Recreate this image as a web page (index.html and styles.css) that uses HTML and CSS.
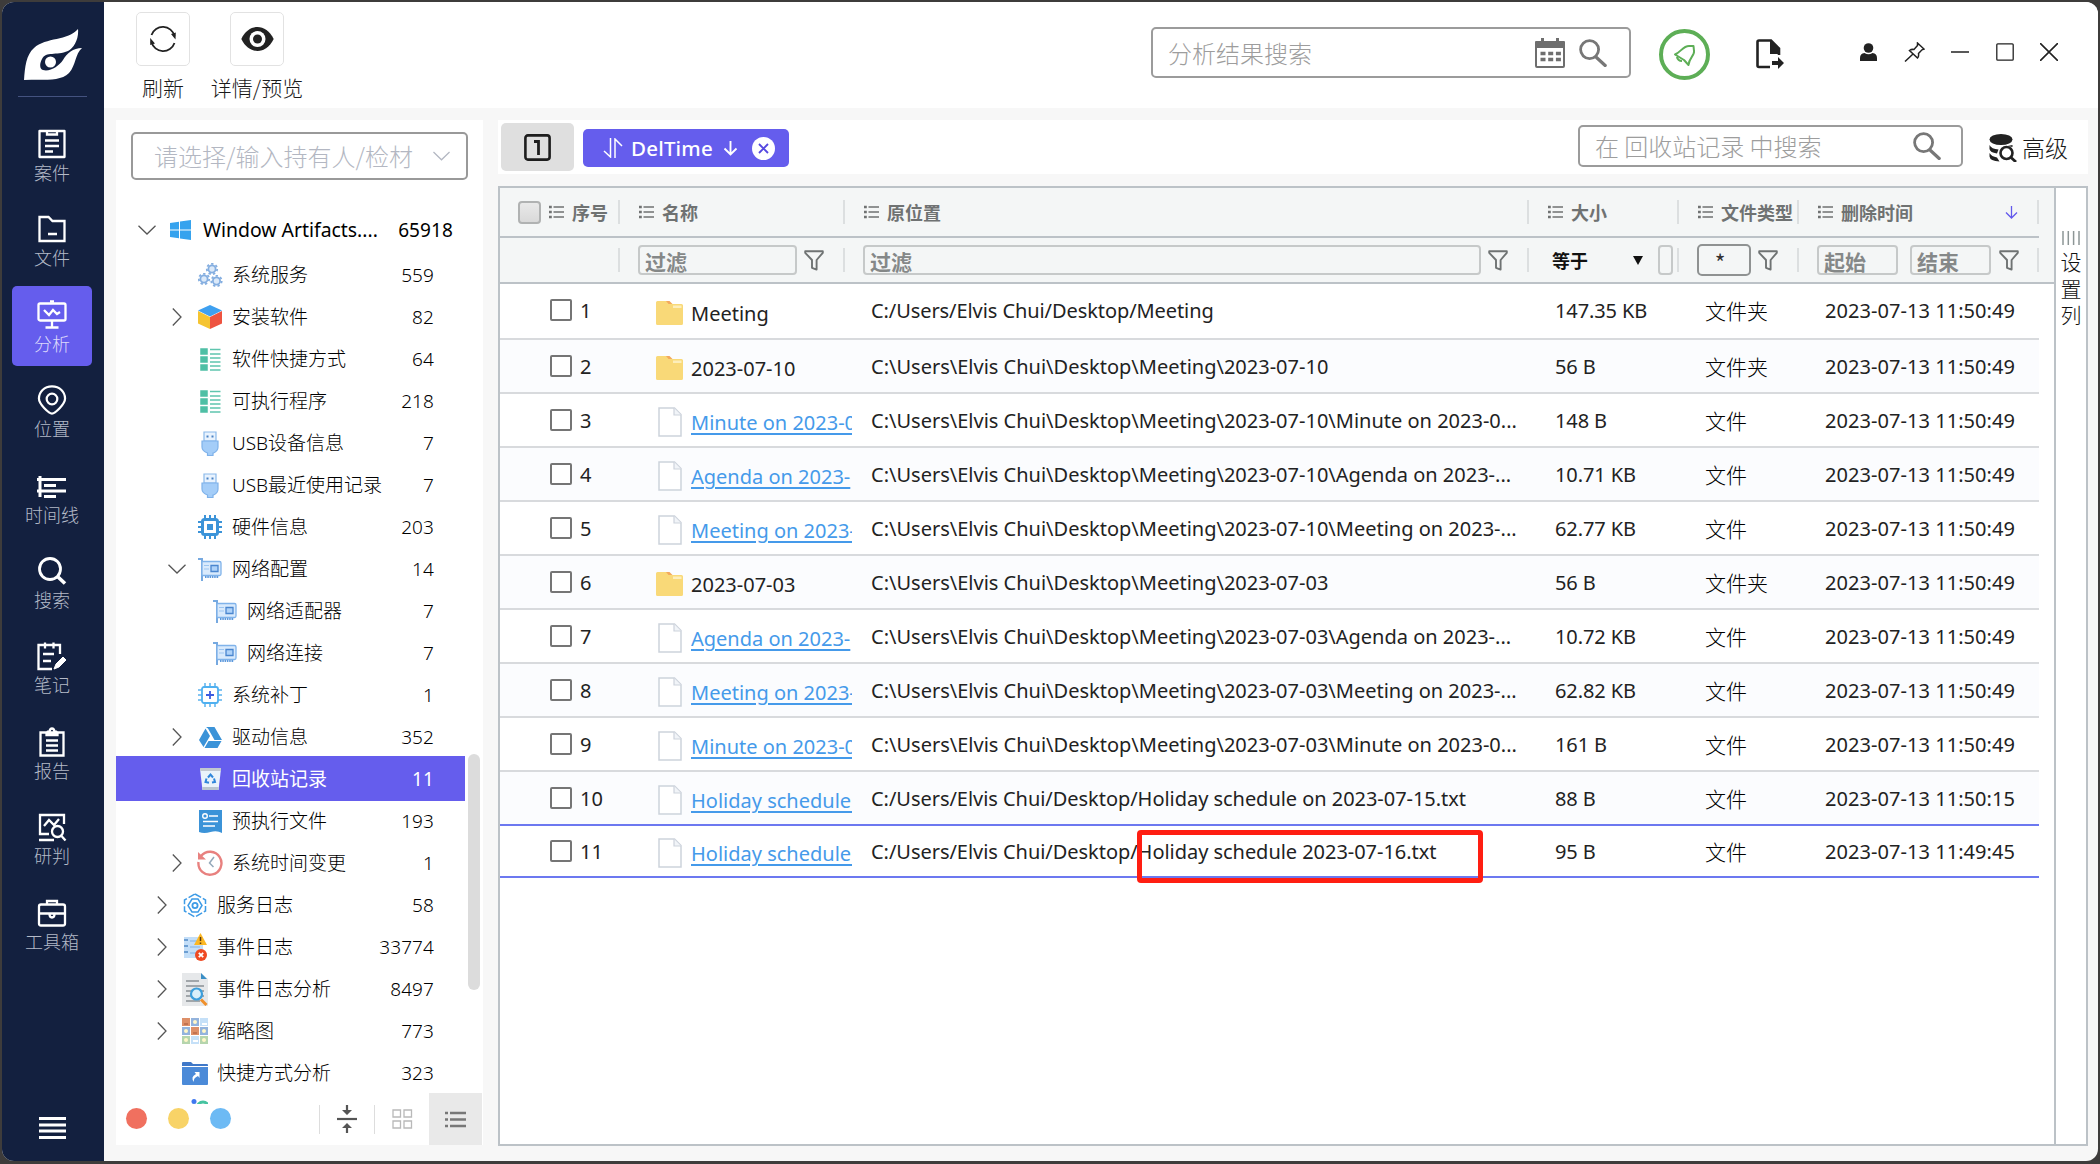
FILE: index.html
```html
<!DOCTYPE html>
<html lang="zh-CN">
<head>
<meta charset="utf-8">
<title>回收站记录</title>
<link rel="stylesheet" href="styles.css">
</head>
<body>
<svg class="defs" aria-hidden="true">
  <symbol id="list" viewBox="0 0 15 14"><path d="M4.5 2H15M4.5 7H15M4.5 12H15" stroke="currentColor" stroke-width="1.6"/><path d="M0 2h2.8M0 7h2.8M0 12h2.8" stroke="currentColor" stroke-width="2.6"/></symbol>
  <symbol id="funnel" viewBox="0 0 20 21"><path d="M1.2 1.2h17.6v1.6L12.6 10v9.6L8 17.8V10L1.2 2.8z" fill="none" stroke="#6f7373" stroke-width="1.9" stroke-linejoin="round"/></symbol>
  <symbol id="search" viewBox="0 0 28 28"><circle cx="10.6" cy="10.6" r="9" fill="none" stroke="currentColor" stroke-width="2.8"/><path d="M17.5 18.5l8.7 8" stroke="currentColor" stroke-width="3.2" stroke-linecap="round"/></symbol>
  <symbol id="down" viewBox="0 0 18 10"><path d="M.5.8L9 9 17.500.8" fill="none" stroke="currentColor" stroke-width="1.3"/></symbol>
  <symbol id="right" viewBox="0 0 10 18"><path d="M.8.500L9 9 .8 17.500" fill="none" stroke="currentColor" stroke-width="1.3"/></symbol>
  <symbol id="folder" viewBox="0 0 27 24"><path d="M0 1.500Q0 0 1.500 0H11l4 3h10.500Q27 3 27 4.500V22.500Q27 24 25.500 24H1.500Q0 24 0 22.500z" fill="#f9d978"/><path d="M10 0h3.500l3 3h-4z" fill="#f3a95d"/><path d="M17 4.500h8.500v2.500H17z" fill="#fdeebb"/></symbol>
  <symbol id="file" viewBox="0 0 24 30"><path d="M1 1h15.500L23 7.500V29H1z" fill="#fff" stroke="#cdd3dc" stroke-width="1.500"/><path d="M16 1v7h7" fill="#f1f4f8" stroke="#cdd3dc" stroke-width="1.200"/></symbol>
  <symbol id="rows" viewBox="0 0 21 25"><path d="M0 1h8v7H0zM0 9h8v7H0zM0 17h8v7H0z" fill="#4fbfa5" stroke="#fff" stroke-width=".5"/><path d="M10 2.500h10.500M10 7h10.500M10 11h10.500M10 15h10.500M10 19h10.500M10 23h10.500" stroke="#5fc5ae" stroke-width="1.300"/></symbol>
  <symbol id="usb" viewBox="0 0 18 25"><path d="M3 1h12v9H3z" fill="#e9f3fe" stroke="#8bb9ea" stroke-width="1.200"/><path d="M5.500 4.500h2v2h-2zM10.500 4.500h2v2h-2z" fill="#4a82c4"/><path d="M1 10h16v6q0 4-4.500 6H12v2.500H6.500V22Q1 20 1 16z" fill="#a4cdf8" stroke="#7fb2ea" stroke-width="1.200"/></symbol>
  <symbol id="card" viewBox="0 0 24 23"><path d="M0 1h4v22" fill="none" stroke="#76a9e0" stroke-width="2"/><path d="M4 3.500h17.500q1.500 0 1.500 1.500v11q0 1.500-1.500 1.500H4z" fill="#d9eafc" stroke="#80b3ea" stroke-width="1.300"/><path d="M13 7.500h7v6h-7z" fill="#aed2f9" stroke="#4a86cf" stroke-width="1.300"/><path d="M6 7.500h5M6 11h5" stroke="#9cc5f1"/><path d="M7 19h14" stroke="#5d99dc" stroke-width="2.200" stroke-dasharray="1.500 .8"/></symbol>
</svg>

<div class="window">
  <nav class="rail">
    <svg class="logo" viewBox="0 0 58 51"><path d="M0 51C1 38 2 26 10 19 22 8 44 12 54 0 55 10 50 19 44 22 32 27 22 22 18 30 15 36 16 40 19 41 26 43 35 37 39 31 43 24 49 19 58 19 51 25 52 36 45 44 36 53 20 50 0 51z" fill="#fff"/><circle cx="26.500" cy="33" r="5.500" fill="#fff"/></svg>
    <div class="rail-line"></div>
    <div class="rail-items">
      <div class="rail-item"><svg viewBox="0 0 30 30"><path d="M2.500 2h25v26h-25z" stroke-linejoin="round"/><path d="M10 2v3.500h10V2M8 11.500h14M8 17h14M8 22.500h8"/></svg><span>案件</span></div>
      <div class="rail-item"><svg viewBox="0 0 30 30"><path d="M2.500 3h9l4 4h12v20h-25z"/><path d="M11 20h9"/></svg><span>文件</span></div>
      <div class="rail-item active"><svg viewBox="0 0 30 30"><rect x="1.500" y="3.500" width="27" height="17" rx="1.500"/><path d="M13 1.500h4M7 10l5 5 4-5 4 4 3-2M15 21v6M8.500 27.500h13"/></svg><span>分析</span></div>
      <div class="rail-item"><svg viewBox="0 0 30 31"><path d="M15 1.500C7 1.500 1.500 7 1.500 14 1.500 20 12 29.500 15 29.500S28.500 20 28.500 14C28.500 7 23 1.500 15 1.500z"/><circle cx="15" cy="14.500" r="5.500"/></svg><span>位置</span></div>
      <div class="rail-item"><svg viewBox="0 0 30 30"><path d="M3 5v21M0 8.500h29M7 14.500h12M0 20h29M7 25.500h12" stroke-width="3"/></svg><span>时间线</span></div>
      <div class="rail-item"><svg viewBox="0 0 30 30"><circle cx="13" cy="13" r="10.500" stroke-width="2.800"/><path d="M20.500 20.500l7.500 7" stroke-width="3.600"/></svg><span>搜索</span></div>
      <div class="rail-item"><svg viewBox="0 0 30 30"><path d="M23 13V4H1.500v24H15M8 1.500v6M16.500 1.500v6M6 13h11M6 20h8"/><path d="M17 28l2-5 7-7 3 3-7 7z" fill="#fff" stroke-width="1"/></svg><span>笔记</span></div>
      <div class="rail-item"><svg viewBox="0 0 30 30"><path d="M3.500 5.500h23V28.500h-23zM9.500 5.500q1-1 3-1 .5-3 2.500-3t2.500 3q2 0 3 1v2.500h-11zM9 13.500h12M9 18.500h12M9 23.500h12"/></svg><span>报告</span></div>
      <div class="rail-item"><svg viewBox="0 0 30 30"><path d="M12 22H3V3h24v9M2 28h15M7 14l5-6 5 5 5-6"/><circle cx="20.500" cy="19.500" r="5.500"/><path d="M24.500 24l4 4.500"/></svg><span>研判</span></div>
      <div class="rail-item"><svg viewBox="0 0 30 30"><rect x="2" y="6.500" width="26" height="21" rx="2"/><path d="M10 6.500V3h10v3.500M2 15.500h26M12.500 16q0 3.500 2.500 3.500t2.500-3.500"/></svg><span>工具箱</span></div>
    </div>
    <svg class="burger" viewBox="0 0 27 22"><path d="M0 1.500h27M0 8h27M0 14h27M0 20.500h27" stroke="#fff" stroke-width="2.800"/></svg>
  </nav>

  <div class="content">
    <header class="topbar">
      <div class="tool"><div class="tool-btn"><svg width="28" height="28" viewBox="0 0 28 28"><path d="M2.500 10A12 12 0 0 1 25.500 11M25.500 18A12 12 0 0 1 2.500 17" fill="none" stroke="#222" stroke-width="1.800"/><path d="M22 9l4.500 5.500.3-7zM6 18.500L1.200 13v7z" fill="#222"/></svg></div><span>刷新</span></div>
      <div class="tool wide"><div class="tool-btn"><svg width="33" height="24" viewBox="0 0 33 24"><path d="M.3 12C8-4 25-4 32.700 12 25 28 8 28 .3 12z" fill="#222"/><circle cx="16.500" cy="12" r="8" fill="#fff"/><circle cx="16.500" cy="12" r="4.500" fill="#222"/></svg></div><span>详情/预览</span></div>
      <div class="global-search"><span>分析结果搜索</span>
        <svg class="cal" viewBox="0 0 30 30"><path d="M1 5h28v23q0 1-1 1H2q-1 0-1-1z" fill="none" stroke="#6e6e6e" stroke-width="2"/><path d="M0 4q0-1 1-1h28q1 0 1 1v6H0zM6 0h3v4H6zM21 0h3v4h-3z" fill="#6e6e6e"/><path d="M5.500 15.500h20.500M5.500 21.500h20.500" stroke="#6e6e6e" stroke-width="3.500" stroke-dasharray="5 2.700"/></svg>
        <svg class="mag"><use href="#search"/></svg>
      </div>
      <div class="bell"><svg width="24" height="24" viewBox="0 0 24 24"><path d="M2 11.500C8 9 10 3 16 3h4.500l.5 5c1 4-5 7-5.500 14l-4.500-5z" fill="none" stroke="#5dae56" stroke-width="2" stroke-linejoin="round"/><path d="M4 14q1 4 5 4" fill="none" stroke="#5dae56" stroke-width="2.200"/></svg></div>
      <svg class="export" viewBox="0 0 28 30"><path d="M14 28H3Q1.500 28 1.500 26.500V3Q1.500 1.500 3 1.500H15L23 9.500V16" fill="none" stroke="#222" stroke-width="2.600"/><path d="M14 1l10 10v4H14z" fill="#222"/><path d="M16 22h6v-4l6 6-6 6v-4h-6z" fill="#222"/></svg>
      <div class="win-controls">
        <svg width="17" height="18" viewBox="0 0 17 18"><circle cx="8.500" cy="5" r="4.800" fill="#222"/><path d="M0 18v-3q0-4.500 4.500-5 4 2.500 8 0 4.500.5 4.500 5v3z" fill="#222"/></svg>
        <svg width="21" height="20" viewBox="0 0 21 20"><path d="M13.500 1l6.500 6-2 .8-3.500 3.700q.5 3-1 4.500L5.500 8.500q2-1.500 4.500-1L13.500 3.500zM9 12L1 19.500" fill="none" stroke="#222" stroke-width="1.500"/></svg>
        <svg width="18" height="18" viewBox="0 0 18 18"><path d="M0 9h18" stroke="#222" stroke-width="1.600"/></svg>
        <svg width="18" height="18" viewBox="0 0 18 18"><rect x=".8" y=".8" width="16.400" height="16.400" rx="1" fill="none" stroke="#222" stroke-width="1.300"/></svg>
        <svg width="18" height="18" viewBox="0 0 18 18"><path d="M0 0l18 18M18 0L0 18" stroke="#222" stroke-width="1.600"/></svg>
      </div>
    </header>

    <div class="panes">
      <aside class="tree-pane">
        <div class="holder"><span>请选择/输入持有人/检材</span><svg width="17" height="10"><use href="#down"/></svg></div>
        <div class="tree">
          <div class="node root"><i class="chev"><svg width="18" height="10"><use href="#down"/></svg></i><i class="ico"><svg width="21" height="20" viewBox="0 0 21 20"><path d="M0 3l9-1.300v7.800H0zM10 1.500L21 0v9.500H10zM0 10.500h9v7.800L0 17zM10 10.500h11V20l-11-1.500z" fill="#36a3ee"/></svg></i><span>Window Artifacts....</span><b>65918</b></div>
          <div class="node l2"><i class="chev"></i><i class="ico"><svg width="25" height="24" viewBox="0 0 25 24"><g fill="#dbe9f9" stroke="#84aee0" stroke-width="1.800"><circle cx="14" cy="6" r="3.600"/><circle cx="6" cy="16" r="3.600"/><circle cx="18.500" cy="18" r="3.600"/></g><g fill="none" stroke="#84aee0" stroke-width="1.800" stroke-dasharray="2.300 2.300"><circle cx="14" cy="6" r="5.200"/><circle cx="6" cy="16" r="5.200"/><circle cx="18.500" cy="18" r="5.200"/></g></svg></i><span>系统服务</span><b>559</b></div>
          <div class="node l2"><i class="chev"><svg width="10" height="18"><use href="#right"/></svg></i><i class="ico"><svg width="24" height="24" viewBox="0 0 24 24"><path d="M12 0l12 5.500-12 6L0 5.500z" fill="#3ea0f0"/><path d="M0 6l12 6v12L0 18.500z" fill="#f5c431"/><path d="M24 6l-12 6v12l12-5.500z" fill="#ee5340"/></svg></i><span>安装软件</span><b>82</b></div>
          <div class="node l2"><i class="chev"></i><i class="ico"><svg width="21" height="25"><use href="#rows"/></svg></i><span>软件快捷方式</span><b>64</b></div>
          <div class="node l2"><i class="chev"></i><i class="ico"><svg width="21" height="25"><use href="#rows"/></svg></i><span>可执行程序</span><b>218</b></div>
          <div class="node l2"><i class="chev"></i><i class="ico"><svg width="18" height="25"><use href="#usb"/></svg></i><span>USB设备信息</span><b>7</b></div>
          <div class="node l2"><i class="chev"></i><i class="ico"><svg width="18" height="25"><use href="#usb"/></svg></i><span>USB最近使用记录</span><b>7</b></div>
          <div class="node l2"><i class="chev"></i><i class="ico"><svg width="24" height="24" viewBox="0 0 24 24"><path d="M7 0v24M12 0v24M17 0v24M0 7h24M0 12h24M0 17h24" stroke="#3b93d8" stroke-width="2"/><rect x="4.500" y="4.500" width="15" height="15" rx="2" fill="#fff" stroke="#3b93d8" stroke-width="3"/><path d="M9 9h6v6H9z" fill="#3b93d8"/></svg></i><span>硬件信息</span><b>203</b></div>
          <div class="node l2"><i class="chev"><svg width="18" height="10"><use href="#down"/></svg></i><i class="ico"><svg width="24" height="23"><use href="#card"/></svg></i><span>网络配置</span><b>14</b></div>
          <div class="node l3"><i class="chev"></i><i class="ico"><svg width="24" height="23"><use href="#card"/></svg></i><span>网络适配器</span><b>7</b></div>
          <div class="node l3"><i class="chev"></i><i class="ico"><svg width="24" height="23"><use href="#card"/></svg></i><span>网络连接</span><b>7</b></div>
          <div class="node l2"><i class="chev"></i><i class="ico"><svg width="24" height="24" viewBox="0 0 24 24"><path d="M7 0v24M12 0v24M17 0v24M0 7h24M0 12h24M0 17h24" stroke="#5bb3ee" stroke-width="1.500"/><rect x="4" y="4" width="16" height="16" rx="2" fill="#fff" stroke="#4fb0f0" stroke-width="1.800"/><path d="M12 8v8M8 12h8" stroke="#3b5be0" stroke-width="1.800"/></svg></i><span>系统补丁</span><b>1</b></div>
          <div class="node l2"><i class="chev"><svg width="10" height="18"><use href="#right"/></svg></i><i class="ico"><svg width="23" height="21" viewBox="0 0 23 21"><path d="M7 0h8.500L23 13h-7.500L9 1.500zM6.500 1.500L11 9 4.500 20 0 13zM9.500 14H22.500L18.500 21H5.500z" fill="#3b93d8"/></svg></i><span>驱动信息</span><b>352</b></div>
          <div class="node l2 selected"><i class="chev"></i><i class="ico"><svg width="21" height="22" viewBox="0 0 21 22"><path d="M0 1h21l-2.500 21h-16z" fill="#eaf3fb"/><path d="M0 0h21v3H.3z" fill="#c2c8d0"/><path d="M2.300 19h16.400l-.3 3H2.600z" fill="#b9c5cf"/><path d="M8 9.500l2.500-3 2.500 3M14 10.500l1 3.500-3 .5M9 14.800l-3.500-.8 1-3.500" fill="none" stroke="#2f86db" stroke-width="2"/></svg></i><span>回收站记录</span><b>11</b></div>
          <div class="node l2"><i class="chev"></i><i class="ico"><svg width="23" height="23" viewBox="0 0 23 23"><path d="M0 0h23v23q-5-3-11.500-1Q5 24 0 22z" fill="#3b93d8"/><circle cx="6" cy="6" r="2.300" fill="none" stroke="#fff" stroke-width="1.400"/><path d="M10 6h9M4 11.500h15M4 16h12" stroke="#fff" stroke-width="1.500"/></svg></i><span>预执行文件</span><b>193</b></div>
          <div class="node l2"><i class="chev"><svg width="10" height="18"><use href="#right"/></svg></i><i class="ico"><svg width="26" height="26" viewBox="0 0 26 26"><path d="M4 6A11.500 11.500 0 1 1 1.500 12" fill="none" stroke="#e8817f" stroke-width="2.400"/><path d="M1 2v7.500h8z" fill="#e8817f"/><path d="M17 7l-4.500 6 4 4" fill="none" stroke="#93a8ba" stroke-width="1.500"/></svg></i><span>系统时间变更</span><b>1</b></div>
          <div class="node l1"><i class="chev"><svg width="10" height="18"><use href="#right"/></svg></i><i class="ico"><svg width="24" height="25" viewBox="0 0 24 25"><g fill="none" stroke="#3d9be6" stroke-width="1.500"><path d="M12 1l10.500 6v11L12 24 1.500 18V7z" stroke-dasharray="7 2"/><path d="M9 6h6l4 6.500-4 6.500H9l-4-6.500z"/><circle cx="12" cy="12.500" r="2.600" stroke-width="1.800"/></g></svg></i><span>服务日志</span><b>58</b></div>
          <div class="node l1"><i class="chev"><svg width="10" height="18"><use href="#right"/></svg></i><i class="ico"><svg width="24" height="28" viewBox="0 0 24 28"><path d="M1 4h19v21H1z" fill="#c3def8"/><path d="M1 7h4M1 13h4M1 19h4" stroke="#6c9ed2" stroke-width="2"/><path d="M7 8h10M7 14h10M7 20h8" stroke="#96c0ea" stroke-width="1.500"/><path d="M17.500 0L24 12H11z" fill="#fbb724"/><path d="M17.500 4v4M17.500 9.500v1.500" stroke="#5c3b10" stroke-width="1.500"/><circle cx="18" cy="22" r="6" fill="#ef4a23"/><path d="M15.800 19.800l4.400 4.400M20.200 19.800l-4.400 4.400" stroke="#fff" stroke-width="1.800"/></svg></i><span>事件日志</span><b>33774</b></div>
          <div class="node l1"><i class="chev"><svg width="10" height="18"><use href="#right"/></svg></i><i class="ico"><svg width="26" height="33" viewBox="0 0 26 33"><path d="M0 0h19l7 6v27H0z" fill="#e6e8ea"/><path d="M19 0l6 6h-6z" fill="#3b8fc6"/><path d="M4 8h13M4 13h18M4 18h18M4 23h18M4 28h14" stroke="#8a9095" stroke-width="1.400"/><circle cx="14.500" cy="21" r="5.500" fill="#d8effa" stroke="#3c9edb" stroke-width="2.200"/><path d="M19 26.500l5.500 5.500" stroke="#f0902c" stroke-width="3"/></svg></i><span>事件日志分析</span><b>8497</b></div>
          <div class="node l1"><i class="chev"><svg width="10" height="18"><use href="#right"/></svg></i><i class="ico"><svg width="26" height="26" viewBox="0 0 26 26"><path d="M0 0h8v8H0zM9 9h8v8H9z" fill="#dd8f68"/><path d="M9 0h8v8H9zM0 9h8v8H0zM18 9h8v8h-8z" fill="#93b3dc"/><path d="M18 0h8v8h-8zM9 18h8v8H9z" fill="#c5e0f8"/><path d="M0 18h8v8H0zM18 18h8v8h-8z" fill="#b5d5ad"/><g fill="#fff7c8"><circle cx="13" cy="4" r="2"/><circle cx="4" cy="13" r="2"/><circle cx="22" cy="13" r="2"/><circle cx="4" cy="22" r="2"/><circle cx="22" cy="22" r="2"/></g><path d="M2 6h4M11 15h4" stroke="#b96a48" stroke-width="1.500"/><path d="M20 6h5M11 23h5" stroke="#fff" stroke-width="2"/></svg></i><span>缩略图</span><b>773</b></div>
          <div class="node l1"><i class="chev"></i><i class="ico"><svg width="26" height="23" viewBox="0 0 26 23"><path d="M0 1q0-1 1-1h8l2 2h14q1 0 1 1v1H0z" fill="#3f78c8"/><path d="M0 5h26v17q0 1-1 1H1q-1 0-1-1z" fill="#4b8ad8"/><path d="M12 20q-4-5 2-8l-1.500-2H17.500v6l-1.500-2q-5 2-4 6z" fill="#fff"/></svg></i><span>快捷方式分析</span><b>323</b></div>
          <div class="node l1"><i class="chev"></i><i class="ico"><svg width="26" height="32" viewBox="0 0 26 32"><circle cx="12" cy="2.500" r="2.500" fill="#3f78f0"/><path d="M12 7v5" stroke="#3f78f0" stroke-width="4"/><circle cx="21" cy="9" r="6" fill="none" stroke="#45c3a0" stroke-width="3"/></svg></i></div>
        </div>
        <div class="thumb"></div>
        <footer class="tree-foot">
          <i class="dot red"></i><i class="dot yellow"></i><i class="dot blue"></i>
          <div class="foot-btn collapse"><svg width="20" height="28" viewBox="0 0 20 28"><path d="M0 14h20" stroke="#555" stroke-width="2.200"/><path d="M10 0v6M10 22v6" stroke="#555" stroke-width="2.200"/><path d="M5 5h10l-5 5zM5 23h10l-5-5z" fill="#555"/></svg></div>
          <div class="foot-btn grid"><svg width="21" height="20" viewBox="0 0 21 20"><path d="M1 1h7.500v7H1zM12 1h7.500v7H12zM1 12h7.500v7H1zM12 12h7.500v7H12z" fill="none" stroke="#b9b9b9" stroke-width="1.300"/></svg></div>
          <div class="foot-btn on"><svg width="21" height="17" viewBox="0 0 21 17"><path d="M5 2h16M5 8.500h16M5 15h16M0 2h3M0 8.500h3M0 15h3" stroke="#777" stroke-width="2.400"/></svg></div>
        </footer>
      </aside>

      <main class="main">
        <div class="toolbar">
          <div class="one"><svg width="27" height="27" viewBox="0 0 27 27"><rect x="1.400" y="1.400" width="24.200" height="24.200" rx="2.500" fill="none" stroke="#1d1d1d" stroke-width="2.600"/><path d="M10 7.500h4.500V21" fill="none" stroke="#1d1d1d" stroke-width="2.800"/></svg></div>
          <div class="sort-chip"><svg width="20" height="20" viewBox="0 0 20 20"><path d="M7.500 0v19L1 13M12 20V1l7 7" fill="none" stroke="#fff" stroke-width="1.500"/></svg><span>DelTime</span><svg class="arr" width="15" height="16" viewBox="0 0 15 16"><path d="M7.500 1v13.500M1.500 8.500l6 6 6-6" fill="none" stroke="#fff" stroke-width="1.900"/></svg><svg class="x" width="23" height="23" viewBox="0 0 23 23"><circle cx="11.500" cy="11.500" r="11.500" fill="#fff"/><path d="M7 7l9 9M16 7l-9 9" stroke="#5548e0" stroke-width="1.900"/></svg></div>
          <div class="local-search"><span>在 回收站记录 中搜索</span><svg class="mag"><use href="#search"/></svg></div>
          <div class="advanced"><svg width="28" height="28" viewBox="0 0 28 28"><ellipse cx="12" cy="5.500" rx="11.500" ry="5.500" fill="#222"/><path d="M.5 11q2 4 9 4.500l-1.500 4Q1 18.500.5 15zM.5 19q2 3.500 7.500 4.500l2.500 4Q1 27 .5 22.500zM23.500 11v2l-5-1z" fill="#222"/><circle cx="17.500" cy="19" r="6" fill="#fff" stroke="#222" stroke-width="2.600"/><path d="M22 23.500l5 4.500" stroke="#222" stroke-width="2.800"/></svg><span>高级</span></div>
        </div>

        <div class="grid-box">
          <div class="table">
            <div class="row head">
              <div class="c seq"><i class="check-all"></i><svg class="li"><use href="#list"/></svg><span>序号</span></div>
              <div class="c"><svg class="li"><use href="#list"/></svg><span>名称</span></div>
              <div class="c"><svg class="li"><use href="#list"/></svg><span>原位置</span></div>
              <div class="c"><svg class="li"><use href="#list"/></svg><span>大小</span></div>
              <div class="c"><svg class="li"><use href="#list"/></svg><span>文件类型</span></div>
              <div class="c"><svg class="li"><use href="#list"/></svg><span>删除时间</span><svg class="sorted" viewBox="0 0 13 13"><path d="M6.500 0v12M1 6.500l5.500 5.500 5.500-5.500" fill="none" stroke="#6258ec" stroke-width="1.300"/></svg></div>
            </div>
            <div class="row filter">
              <div class="c"></div>
              <div class="c"><div class="inp grow">过滤</div><svg class="fu"><use href="#funnel"/></svg></div>
              <div class="c"><div class="inp grow">过滤</div><svg class="fu"><use href="#funnel"/></svg></div>
              <div class="c op"><span>等于</span><i class="tri"></i><div class="inp tiny"></div></div>
              <div class="c"><div class="inp star">*</div><svg class="fu"><use href="#funnel"/></svg></div>
              <div class="c dates"><div class="inp">起始</div><div class="inp">结束</div><svg class="fu"><use href="#funnel"/></svg></div>
            </div>
            <div class="row first"><div class="d seq"><i class="cb"></i>1</div><div class="d name"><svg class="fo"><use href="#folder"/></svg><span>Meeting</span></div><div class="d path tight">C:/Users/Elvis Chui/Desktop/Meeting</div><div class="d size">147.35 KB</div><div class="d type">文件夹</div><div class="d time">2023-07-13 11:50:49</div></div>
            <div class="row alt"><div class="d seq"><i class="cb"></i>2</div><div class="d name"><svg class="fo"><use href="#folder"/></svg><span>2023-07-10</span></div><div class="d path">C:\Users\Elvis Chui\Desktop\Meeting\2023-07-10</div><div class="d size">56 B</div><div class="d type">文件夹</div><div class="d time">2023-07-13 11:50:49</div></div>
            <div class="row"><div class="d seq"><i class="cb"></i>3</div><div class="d name"><svg class="fi"><use href="#file"/></svg><a>Minute on 2023-0</a></div><div class="d path">C:\Users\Elvis Chui\Desktop\Meeting\2023-07-10\Minute on 2023-0...</div><div class="d size">148 B</div><div class="d type">文件</div><div class="d time">2023-07-13 11:50:49</div></div>
            <div class="row alt"><div class="d seq"><i class="cb"></i>4</div><div class="d name"><svg class="fi"><use href="#file"/></svg><a>Agenda on 2023-</a></div><div class="d path">C:\Users\Elvis Chui\Desktop\Meeting\2023-07-10\Agenda on 2023-...</div><div class="d size">10.71 KB</div><div class="d type">文件</div><div class="d time">2023-07-13 11:50:49</div></div>
            <div class="row"><div class="d seq"><i class="cb"></i>5</div><div class="d name"><svg class="fi"><use href="#file"/></svg><a>Meeting on 2023-</a></div><div class="d path">C:\Users\Elvis Chui\Desktop\Meeting\2023-07-10\Meeting on 2023-...</div><div class="d size">62.77 KB</div><div class="d type">文件</div><div class="d time">2023-07-13 11:50:49</div></div>
            <div class="row alt"><div class="d seq"><i class="cb"></i>6</div><div class="d name"><svg class="fo"><use href="#folder"/></svg><span>2023-07-03</span></div><div class="d path">C:\Users\Elvis Chui\Desktop\Meeting\2023-07-03</div><div class="d size">56 B</div><div class="d type">文件夹</div><div class="d time">2023-07-13 11:50:49</div></div>
            <div class="row"><div class="d seq"><i class="cb"></i>7</div><div class="d name"><svg class="fi"><use href="#file"/></svg><a>Agenda on 2023-</a></div><div class="d path">C:\Users\Elvis Chui\Desktop\Meeting\2023-07-03\Agenda on 2023-...</div><div class="d size">10.72 KB</div><div class="d type">文件</div><div class="d time">2023-07-13 11:50:49</div></div>
            <div class="row alt"><div class="d seq"><i class="cb"></i>8</div><div class="d name"><svg class="fi"><use href="#file"/></svg><a>Meeting on 2023-</a></div><div class="d path">C:\Users\Elvis Chui\Desktop\Meeting\2023-07-03\Meeting on 2023-...</div><div class="d size">62.82 KB</div><div class="d type">文件</div><div class="d time">2023-07-13 11:50:49</div></div>
            <div class="row"><div class="d seq"><i class="cb"></i>9</div><div class="d name"><svg class="fi"><use href="#file"/></svg><a>Minute on 2023-0</a></div><div class="d path">C:\Users\Elvis Chui\Desktop\Meeting\2023-07-03\Minute on 2023-0...</div><div class="d size">161 B</div><div class="d type">文件</div><div class="d time">2023-07-13 11:50:49</div></div>
            <div class="row alt focus"><div class="d seq"><i class="cb"></i>10</div><div class="d name"><svg class="fi"><use href="#file"/></svg><a>Holiday schedule </a></div><div class="d path snug">C:/Users/Elvis Chui/Desktop/Holiday schedule on 2023-07-15.txt</div><div class="d size">88 B</div><div class="d type">文件</div><div class="d time">2023-07-13 11:50:15</div></div>
            <div class="row focus last"><div class="d seq"><i class="cb"></i>11</div><div class="d name"><svg class="fi"><use href="#file"/></svg><a>Holiday schedule </a></div><div class="d path snug">C:/Users/Elvis Chui/Desktop/Holiday schedule 2023-07-16.txt<i class="mark"></i></div><div class="d size">95 B</div><div class="d type">文件</div><div class="d time">2023-07-13 11:49:45</div></div>
          </div>
          <div class="columns-tab"><svg width="18" height="14" viewBox="0 0 18 14"><path d="M1 0v14M6.300 0v14M11.600 0v14M17 0v14" stroke="#8d9696" stroke-width="1.500"/></svg><span>设</span><span>置</span><span>列</span></div>
        </div>
      </main>
    </div>
  </div>
</div>
</body>
</html>
```
FILE: styles.css
```css
* { box-sizing: border-box; }
body {
  margin: 0;
  width: 2100px;
  height: 1164px;
  padding: 2px 2px 3px;
  overflow: hidden;
  background: #3e3c3b;
  font-family: "Noto Sans", "Noto Sans CJK SC", sans-serif;
  font-size: 20px;
  color: #1a1a1a;
}
i, b { font-style: normal; font-weight: 400; }
svg { display: block; flex: none; }
.defs { position: absolute; width: 0; height: 0; }
.window { display: flex; height: 1159px; border-radius: 12px; overflow: hidden; background: #f7f7f7; }

/* Navigation rail */
.rail { width: 102px; flex: none; background: #13203f; display: flex; flex-direction: column; align-items: center; padding: 27px 2px 0 0; }
.logo { width: 58px; height: 51px; margin-left: 2px; }
.rail-line { width: 69px; height: 1px; margin-top: 16px; background: #44527f; }
.rail-items { margin-top: 18px; display: flex; flex-direction: column; gap: 5.4px; }
.rail-item { width: 80px; height: 80px; border-radius: 5px; display: flex; flex-direction: column; align-items: center; padding-top: 14px; color: #b4bac8; font: 300 18px/26px "Noto Sans CJK SC", sans-serif; }
.rail-item svg { width: 30px; height: 30px; fill: none; stroke: #fff; stroke-width: 2.3; }
.rail-item.active { background: #655ded; color: #dcd9fb; }
.burger { width: 27px; height: 22px; margin-top: auto; margin-bottom: 22px; }

/* Top bar */
.content { flex: 1; min-width: 0; }
.topbar { height: 106px; background: #fff; display: flex; padding-left: 20px; }
.tool { width: 78px; padding-top: 10px; display: flex; flex-direction: column; align-items: center; font: 300 21px/32px "Noto Sans CJK SC", sans-serif; white-space: nowrap; }
.tool.wide { margin-left: 5px; width: 100px; }
.tool-btn { width: 54px; height: 54px; border: 1px solid #e2e2e2; border-radius: 5px; display: flex; align-items: center; justify-content: center; }
.tool span { margin-top: 5px; }
.global-search { width: 480px; height: 51px; margin: 25px 0 0 844px; border: 2px solid #9b9b9b; border-radius: 5px; display: flex; align-items: center; padding: 0 22px 0 15px; color: #9d9d9d; font: 300 24px/40px "Noto Sans CJK SC", sans-serif; }
.global-search span { flex: 1; }
.cal { width: 30px; height: 30px; margin-right: 14px; }
.mag { width: 28px; height: 28px; color: #777; }
.bell { width: 51px; height: 51px; margin: 27px 0 0 28px; border: 4px solid #5dae56; border-radius: 50%; display: flex; align-items: center; justify-content: center; }
.export { width: 28px; height: 30px; margin: 37px 0 0 46px; }
.win-controls { margin: 41px 0 0 76px; height: 18px; display: flex; align-items: center; gap: 26.5px; }

.panes { display: flex; gap: 15px; padding: 12px 10px 0 12px; }

/* Evidence tree */
.tree-pane { width: 367px; height: 1025px; background: #fff; position: relative; display: flex; flex-direction: column; }
.holder { margin: 12px 0 0 15px; width: 337px; height: 48px; flex: none; border: 2px solid #999; border-radius: 5px; display: flex; align-items: center; justify-content: space-between; padding: 0 16px 0 21px; color: #b3b7c2; font: 300 24px/40px "Noto Sans CJK SC", sans-serif; white-space: nowrap; }
.tree { height: 924px; padding-top: 26px; overflow: hidden; }
.node { height: 42px; width: 349px; display: flex; align-items: center; padding-right: 31px; font: 300 19px/30px "Noto Sans", "Noto Sans CJK SC", sans-serif; white-space: nowrap; color: #000; }
.node .chev { width: 30px; display: flex; justify-content: center; color: #555; }
.node .ico { width: 36px; display: flex; justify-content: center; margin-right: 4px; }
.node b { margin-left: auto; font-weight: 300; letter-spacing: .1px; }
.root { height: 48px; padding: 0 0 0 16px; width: 337px; font-weight: 400; font-size: 19.4px; }
.root .ico { margin-right: 5px; }
.root b { font-weight: 400; font-size: 19px; }
.l1 { padding-left: 31px; }
.l2 { padding-left: 46px; }
.l3 { padding-left: 61px; }
.node.selected { height: 45px; margin: -2px 0 -1px; padding-top: 1px; background: #655ded; color: #fff; font-weight: 400; }
.selected b { font-weight: 400; }
.thumb { position: absolute; right: 3px; top: 634px; width: 12px; height: 236px; border-radius: 6px; background: #dcdcdc; }
.tree-foot { position: absolute; left: 0; right: 0; bottom: 0; height: 52px; display: flex; align-items: center; padding-left: 10px; }
.dot { width: 21px; height: 21px; border-radius: 50%; margin: 0 21px 2px 0; }
.red { background: #f0705f; }
.yellow { background: #f8d367; }
.blue { background: #6dbaf4; }
.foot-btn { height: 52px; display: flex; align-items: center; justify-content: center; }
.foot-btn.collapse { height: 29px; margin-left: 67px; width: 56px; border-left: 1px solid #ddd; border-right: 1px solid #ddd; }
.foot-btn.grid { width: 54px; }
.on { width: 53px; background: #e9e9e9; }

/* Results */
.main { flex: 1; min-width: 0; }
.toolbar { height: 54px; background: #fff; display: flex; align-items: flex-start; padding: 3px 0 0 3px; }
.one { width: 73px; height: 48px; background: #dfdfdf; border-radius: 5px; display: flex; align-items: center; justify-content: center; }
.sort-chip { width: 206px; height: 38px; margin: 6px 0 0 9px; border-radius: 5px; background: #655ded; color: #fff; display: flex; align-items: center; padding-left: 20px; font-size: 20.5px; font-weight: 500; }
.sort-chip span { margin-left: 8px; width: 84px; letter-spacing: .2px; }
.sort-chip .arr { margin-left: 8px; }
.sort-chip .x { margin-left: 14px; }
.local-search { width: 385px; height: 42px; margin: 2px 0 0 789px; border: 2px solid #9b9b9b; border-radius: 5px; display: flex; align-items: center; justify-content: space-between; padding: 0 20px 0 15px; color: #9d9d9d; font: 300 24px/36px "Noto Sans CJK SC", sans-serif; }
.advanced { display: flex; align-items: center; margin: 8px 0 0 26px; font: 300 23px/34px "Noto Sans CJK SC", sans-serif; gap: 5px; }
.advanced span { margin-top: -1px; }

.grid-box { height: 960px; margin-top: 12px; border: 2px solid #bcc2c7; background: #fff; display: flex; }
.table { width: 1556px; flex: none; border-right: 2px solid #bcc2c7; }
.row { display: grid; grid-template-columns: 120px 225px 684px 150px 120px 240px; width: 1539px; height: 54px; border-bottom: 2px solid #d8dadd; align-items: center; }
.head, .filter { background: #f4f6f6; border-color: #bcc2c7; }
.head { height: 50px; box-shadow: 15px 0 0 #f4f6f6; }
.filter { height: 46px; width: 1554px; }
.c { height: 24px; display: flex; align-items: center; padding-left: 19px; border-right: 2px solid #dcdfe0; color: #6f7272; font: 700 18px/26px "Noto Sans CJK SC", sans-serif; white-space: nowrap; }
.c.seq { padding-left: 18px; }
.check-all { width: 23px; height: 23px; border: 2px solid #b0b2b2; border-radius: 4px; background: linear-gradient(#e9e9e9, #d9d9d9); margin-right: 8px; }
.li { width: 15px; height: 14px; margin-right: 8px; }
.sorted { width: 13px; height: 13px; margin: 0 19px 0 auto; }
.filter .c { padding-left: 18px; }
.inp { height: 30px; flex: none; border: 2px solid #c6c9c9; border-radius: 4px; font-size: 21px; line-height: 28px; color: #858888; padding-left: 5px; }
.inp.grow { flex: 1; }
.fu { width: 20px; height: 21px; margin: 0 19px 0 7px; }
.filter .c.op { padding-left: 23px; color: #111; padding-right: 4px; }
.tri { margin-left: auto; margin-right: 15px; border: 5px solid transparent; border-top: 9px solid #111; border-bottom: 0; }
.inp.tiny { width: 15px; padding: 0; }
.inp.star { width: 54px; height: 32px; border-color: #8f9292; border-radius: 5px; text-align: center; padding: 0 8px 0 0; color: #333; font-size: 23px; font-weight: 400; line-height: 32px; }
.inp.star + .fu { margin-right: 0; }
.dates .inp { width: 81px; margin-right: 12px; }
.dates .fu { margin-left: -4px; }

.alt { background: #fbfcfe; }
.row.first { height: 56px; }
.first .seq, .first .path, .first .size, .first .type, .first .time { margin-top: -2px; }
.focus { border-color: #6c78f0; }
.row.last { height: 52px; }
.d { display: flex; align-items: center; height: 30px; white-space: pre; color: #222; }
.d.seq { padding-left: 50px; }
.cb { width: 22px; height: 22px; border: 2px solid #757575; border-radius: 2px; margin-right: 8px; background: #fff; }
.name { padding-left: 36px; }
.name span, .name a { margin-top: 8px; width: 161px; flex: none; overflow: hidden; height: 30px; line-height: 28px; }
.name a { color: #459aea; text-decoration: underline; text-decoration-thickness: 2px; text-underline-offset: 3px; }
.fo { width: 27px; height: 24px; margin-right: 8px; margin-top: 3px; }
.fi { width: 24px; height: 30px; margin: 3px 9px 0 2px; }
.path { padding-left: 26px; position: relative; }
.tight { letter-spacing: -.08px; }
.snug { letter-spacing: -.04px; }
.size { padding-left: 26px; letter-spacing: -.1px; }
.type { padding-left: 26px; color: #000; font: 300 21px/30px "Noto Sans CJK SC", sans-serif; }
.time { padding-left: 26px; letter-spacing: .05px; }
.mark { position: absolute; left: 292px; top: -6px; width: 346px; height: 53px; border: 5px solid #ff1e12; border-radius: 4px; }

.columns-tab { flex: 1; display: flex; flex-direction: column; align-items: center; padding: 43px 0 0 0; font: 300 21px/26.7px "Noto Sans CJK SC", sans-serif; color: #111; }
.columns-tab svg { margin-bottom: 3px; }
```
